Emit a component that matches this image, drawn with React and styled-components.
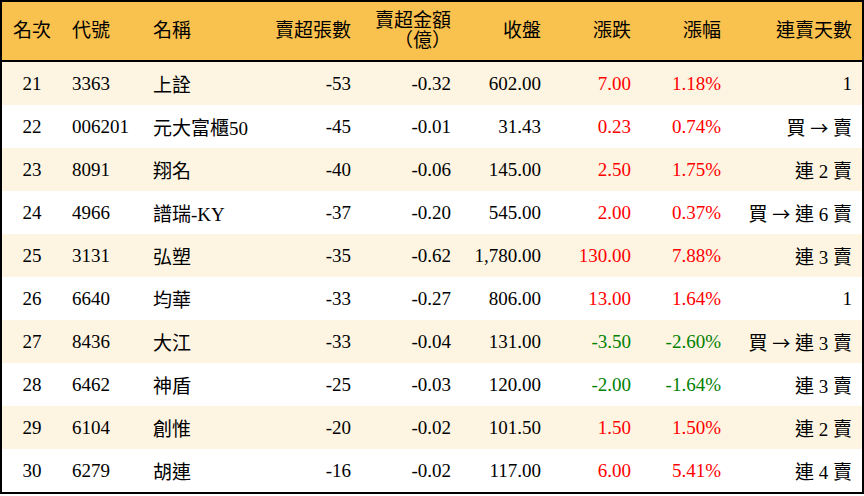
import React from 'react'
import styled, { createGlobalStyle } from 'styled-components'

const GlobalStyle = createGlobalStyle`
  html, body {
    margin: 0;
    padding: 0;
    background: #ffffff;
  }
  body {
    font-family: "Liberation Serif", "Noto Sans CJK TC", serif;
  }
`

const Table = styled.table`
  width: 864px;
  table-layout: fixed;
  border-collapse: separate;
  border-spacing: 0;
  border: 2px solid #000;
  font-size: 19px;
  color: #000;
`

const HeadCell = styled.th`
  height: 60px;
  padding: 0 10px;
  background: #f9c14e;
  border-bottom: 2px solid #000;
  font-weight: normal;
  line-height: 20px;
  text-align: ${(p) => p.$align || 'right'};
  box-sizing: border-box;
`

const Row = styled.tr`
  background: ${(p) => (p.$odd ? '#fdf5e2' : '#ffffff')};
`

const Cell = styled.td`
  height: 43px;
  padding: 0 10px;
  white-space: nowrap;
  text-align: ${(p) => p.$align || 'right'};
  color: ${(p) =>
    p.$tone === 'up' ? '#ff0000' : p.$tone === 'down' ? '#008000' : '#000'};
`

const Arrow = styled.span`
  font-family: "Noto Sans CJK TC", sans-serif;
  font-size: 18px;
`

const columns = [
  { label: '名次', width: 60, align: 'center' },
  { label: '代號', width: 81, align: 'left' },
  { label: '名稱', width: 118, align: 'left' },
  { label: '賣超張數', width: 100 },
  { label: ['賣超金額', '（億）'], width: 100 },
  { label: '收盤', width: 90 },
  { label: '漲跌', width: 90 },
  { label: '漲幅', width: 90 },
  { label: '連賣天數', width: 131 },
]

const rows = [
  [21, '3363', '上詮', -53, '-0.32', '602.00', '7.00', '1.18%', '1'],
  [22, '006201', '元大富櫃50', -45, '-0.01', '31.43', '0.23', '0.74%', '買 → 賣'],
  [23, '8091', '翔名', -40, '-0.06', '145.00', '2.50', '1.75%', '連 2 賣'],
  [24, '4966', '譜瑞-KY', -37, '-0.20', '545.00', '2.00', '0.37%', '買 → 連 6 賣'],
  [25, '3131', '弘塑', -35, '-0.62', '1,780.00', '130.00', '7.88%', '連 3 賣'],
  [26, '6640', '均華', -33, '-0.27', '806.00', '13.00', '1.64%', '1'],
  [27, '8436', '大江', -33, '-0.04', '131.00', '-3.50', '-2.60%', '買 → 連 3 賣'],
  [28, '6462', '神盾', -25, '-0.03', '120.00', '-2.00', '-1.64%', '連 3 賣'],
  [29, '6104', '創惟', -20, '-0.02', '101.50', '1.50', '1.50%', '連 2 賣'],
  [30, '6279', '胡連', -16, '-0.02', '117.00', '6.00', '5.41%', '連 4 賣'],
]

// the streak text may hold an arrow, drawn with the CJK font's wide glyph
function Streak({ text }) {
  const parts = text.split('→')
  if (parts.length === 1) return text
  return (
    <>
      {parts[0]}
      <Arrow>→</Arrow>
      {parts[1]}
    </>
  )
}

export default function App() {
  return (
    <>
      <GlobalStyle />
      <Table>
        <colgroup>
          {columns.map((c, i) => (
            <col key={i} style={{ width: c.width }} />
          ))}
        </colgroup>
        <thead>
          <tr>
            {columns.map((c, i) => (
              <HeadCell key={i} $align={c.align}>
                {Array.isArray(c.label) ? (
                  <>
                    {c.label[0]}
                    <br />
                    {c.label[1]}
                  </>
                ) : (
                  c.label
                )}
              </HeadCell>
            ))}
          </tr>
        </thead>
        <tbody>
          {rows.map((r, i) => {
            const tone = r[6].startsWith('-') ? 'down' : 'up'
            return (
              <Row key={r[0]} $odd={i % 2 === 0}>
                <Cell $align="center">{r[0]}</Cell>
                <Cell $align="left">{r[1]}</Cell>
                <Cell $align="left">{r[2]}</Cell>
                <Cell>{r[3]}</Cell>
                <Cell>{r[4]}</Cell>
                <Cell>{r[5]}</Cell>
                <Cell $tone={tone}>{r[6]}</Cell>
                <Cell $tone={tone}>{r[7]}</Cell>
                <Cell>
                  <Streak text={r[8]} />
                </Cell>
              </Row>
            )
          })}
        </tbody>
      </Table>
    </>
  )
}
